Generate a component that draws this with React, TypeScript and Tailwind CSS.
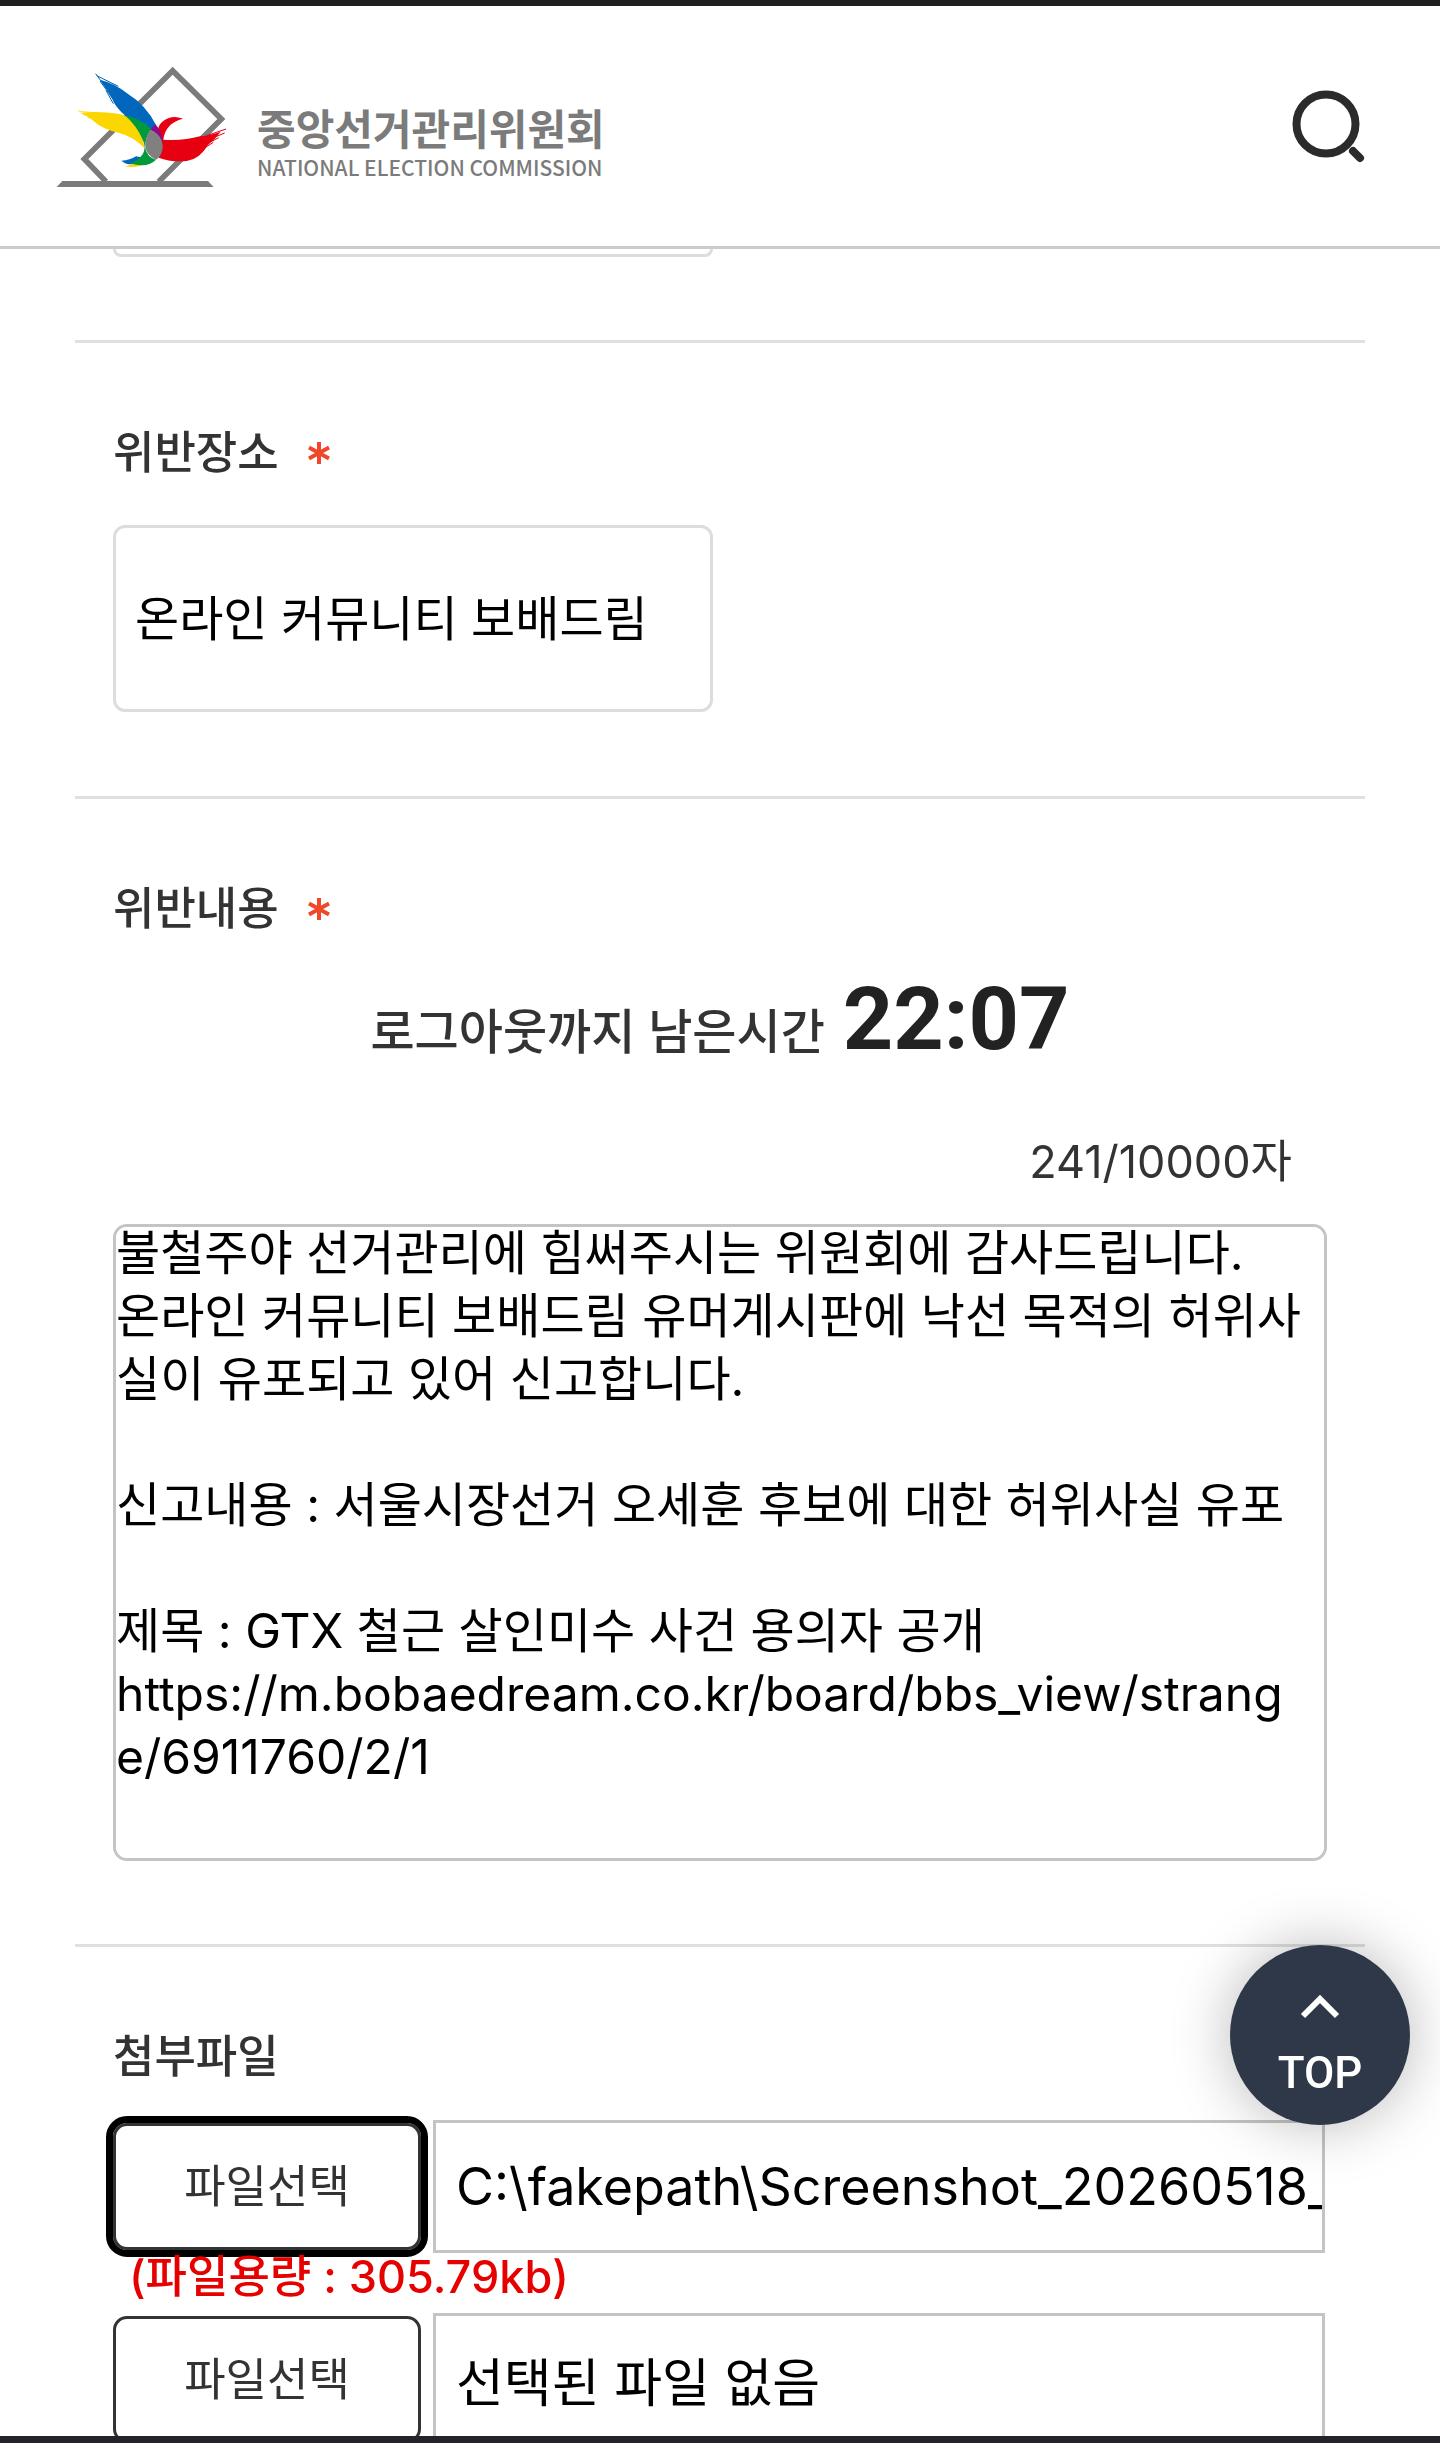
import { useEffect, useRef, useState } from 'react';
import { clsx } from 'clsx';

const reportText = `불철주야 선거관리에 힘써주시는 위원회에 감사드립니다.
온라인 커뮤니티 보배드림 유머게시판에 낙선 목적의 허위사실이 유포되고 있어 신고합니다.

신고내용 : 서울시장선거 오세훈 후보에 대한 허위사실 유포

제목 : GTX 철근 살인미수 사건 용의자 공개
https://m.bobaedream.co.kr/board/bbs_view/strange/6911760/2/1


`;

const files = [
  { id: 'file1', name: 'C:\\fakepath\\Screenshot_20260518_', size: '305.79kb', focused: true },
  { id: 'file2', name: '선택된 파일 없음', size: null, focused: false },
];

function Logo() {
  return (
    <svg viewBox="0 0 540 390" className="w-[180px] h-[130px] shrink-0" aria-hidden="true">
      <path d="M168 362 L103 294 L368 29 L514 174 L326 362" fill="none" stroke="#7b7b7b" strokeWidth="17" />
      <path d="M37 360 H474 L491 378 H20 Z" fill="#7b7b7b" />
      {/* yellow wing */}
      <path d="M90 155 Q150 150 205 158 Q236 163 248 182 Q276 212 284 262 Q250 226 205 215 Q158 206 128 178 Q112 164 90 155 Z" fill="#fbd600" />
      <path d="M84 150 L140 156 M100 162 L150 165 M112 170 L150 172" stroke="#fbd600" strokeWidth="2" />
      <path d="M224 316 Q250 322 280 312 L262 308 Q240 312 224 316 Z" fill="#fbd600" />
      {/* blue wing */}
      <path d="M150 56 Q196 68 230 96 Q288 132 318 192 L302 210 Q262 174 228 166 Q196 140 186 112 Q172 84 150 56 Z" fill="#0067bd" />
      <path d="M137 38 L176 92 M140 44 L205 76 M150 60 L190 116 M168 88 L190 128" stroke="#0067bd" strokeWidth="3" />
      <path d="M214 299 Q240 298 258 286 L280 290 Q262 314 232 309 Q222 306 214 299 Z" fill="#0067bd" />
      {/* red wing */}
      <path d="M399 173 Q346 186 340 236 Q400 240 450 226 Q486 222 512 212 Q494 236 474 252 Q448 296 410 300 Q362 304 326 290 L334 240 Q312 200 340 180 Q366 160 399 173 Z" fill="#e60012" />
      <path d="M470 224 L528 204 M476 236 L524 216 M468 250 L506 230 M462 262 L490 244" stroke="#e60012" strokeWidth="3" />
      {/* overlaps */}
      <path d="M226 164 Q272 172 304 204 Q284 230 286 262 Q292 290 318 296 Q294 320 250 310 Q244 308 240 306 Q262 302 278 280 Q290 258 278 236 Q262 196 226 164 Z" fill="#009a3d" />
      <path d="M316 190 Q338 212 338 246 Q322 214 301 207 Z" fill="#920783" />
      <path d="M301 206 Q340 222 338 262 Q334 288 318 296 Q284 280 286 250 Q288 224 301 206 Z" fill="#808080" />
    </svg>
  );
}

function Label({ htmlFor, required, children }: { htmlFor: string; required?: boolean; children: string }) {
  return (
    <label htmlFor={htmlFor} className="flex items-center gap-7 text-[45px] leading-[60px] font-medium text-[#333]">
      {children}
      {required && (
        <svg viewBox="0 0 24 24" className="w-6 h-6" aria-label="필수">
          <path d="M12 1v22M2 6.500l20 11M22 6.500l-20 11" stroke="#f0472a" strokeWidth="4" fill="none" />
        </svg>
      )}
    </label>
  );
}

export default function App() {
  const [place, setPlace] = useState('온라인 커뮤니티 보배드림');
  const [content, setContent] = useState(reportText);
  const contentRef = useRef<HTMLTextAreaElement>(null);

  useEffect(() => {
    if (contentRef.current) contentRef.current.scrollTop = 6;
  }, []);

  return (
    <div className='relative flex h-screen flex-col overflow-hidden bg-white font-[Inter,"Noto_Sans_CJK_KR",sans-serif] text-black'>
      <div className="h-1.5 shrink-0 bg-[#1f1f21]" />

      <header className="flex h-[243px] shrink-0 items-center justify-between border-b-[3px] border-[#ccc] bg-white pl-[50px] pr-[74px]">
        <a href="#" className="flex items-end gap-[27px] text-[#7b7b7b]">
          <Logo />
          <span className='flex flex-col gap-0.5 pb-3 font-["Noto_Sans_CJK_KR",sans-serif]'>
            <span className="text-[42px] leading-[52px] font-bold">중앙선거관리위원회</span>
            <span className="text-[21px] leading-6 font-medium">NATIONAL ELECTION COMMISSION</span>
          </span>
        </a>
        <button aria-label="검색">
          <svg viewBox="0 0 80 80" className="w-20 h-20" fill="none" stroke="#2b2b2b" strokeWidth="8">
            <circle cx="40" cy="38" r="29.500" />
            <path d="M67 65l7 7" strokeLinecap="round" />
          </svg>
        </button>
      </header>

      <main className="min-h-0 flex-1 overflow-hidden px-[75px]">
        <div className="flex h-[91px] items-start px-[38px]">
          <input aria-label="위반일시" className="h-2 w-[600px] rounded-b-xl border-[3px] border-t-0 border-[#ddd]" />
        </div>

        <section className="border-t-[3px] border-[#e0e0e0] px-[38px] pt-20 pb-[84px]">
          <Label htmlFor="place" required>위반장소</Label>
          <input
            id="place"
            value={place}
            onChange={(e) => setPlace(e.target.value)}
            className="mt-[42px] block h-[187px] w-[600px] rounded-xl border-[3px] border-[#ddd] bg-white px-[19px] pb-2 text-[48px]"
          />
        </section>

        <section className="border-t-[3px] border-[#e0e0e0] px-[38px] pt-20 pb-[83px]">
          <Label htmlFor="content" required>위반내용</Label>
          <p className="mt-[30px] flex items-baseline justify-center gap-[18px] leading-[100px] text-[48px] font-medium text-[#333]">
            로그아웃까지 남은시간
            <strong className='font-[Roboto,sans-serif] text-[88px] font-bold text-[#222]'>22:07</strong>
          </p>
          <p className="mt-[50px] pr-[35px] text-right text-[45px] leading-[60px] text-[#333]">241/10000자</p>
          <textarea
            id="content"
            ref={contentRef}
            value={content}
            onChange={(e) => setContent(e.target.value)}
            className="mt-8 block h-[637px] w-full resize-none break-all rounded-[14px] border-[3px] border-[#c4c4c4] bg-white text-[48px] leading-[63px] [scrollbar-width:none]"
          />
        </section>

        <section className="border-t-[3px] border-[#e0e0e0] px-[38px] pt-20">
          <Label htmlFor="file1">첨부파일</Label>
          <div className="mt-[33px] flex flex-col">
            {files.map((f) => (
              <div key={f.id}>
                <div className="flex items-center gap-3 pr-0.5">
                  <button
                    className={clsx(
                      'h-[127px] w-[308px] shrink-0 rounded-[14px] border-[3px] border-[#333] bg-white text-[45px] text-[#333]',
                      f.focused && 'outline-[7px] outline-black',
                    )}
                  >
                    파일선택
                  </button>
                  <input
                    id={f.id}
                    aria-label="첨부파일"
                    readOnly
                    value={f.name}
                    className="h-[133px] min-w-0 flex-1 border-[3px] border-[#c4c4c4] bg-white pl-5 text-[52px]"
                  />
                </div>
                {f.size && (
                  <p className="mb-3 pl-4 text-[45px] leading-[48px] font-medium text-[#e60000]">(파일용량 : {f.size})</p>
                )}
              </div>
            ))}
          </div>
        </section>
      </main>

      <div className="h-[7px] shrink-0 bg-[#222428]" />

      <button className="absolute right-[30px] bottom-[318px] flex h-[180px] w-[180px] flex-col items-center rounded-full bg-[#2f3848] pt-[48px] text-white shadow-[0_0_60px_rgba(0,0,0,0.28)]">
        <svg viewBox="0 0 40 26" className="h-[26px] w-10" fill="none" stroke="currentColor" strokeWidth="6">
          <path d="M3 23L20 6l17 17" />
        </svg>
        <span className="mt-6 font-[Roboto,sans-serif] text-[44px] leading-[60px] font-medium">TOP</span>
      </button>
    </div>
  );
}
